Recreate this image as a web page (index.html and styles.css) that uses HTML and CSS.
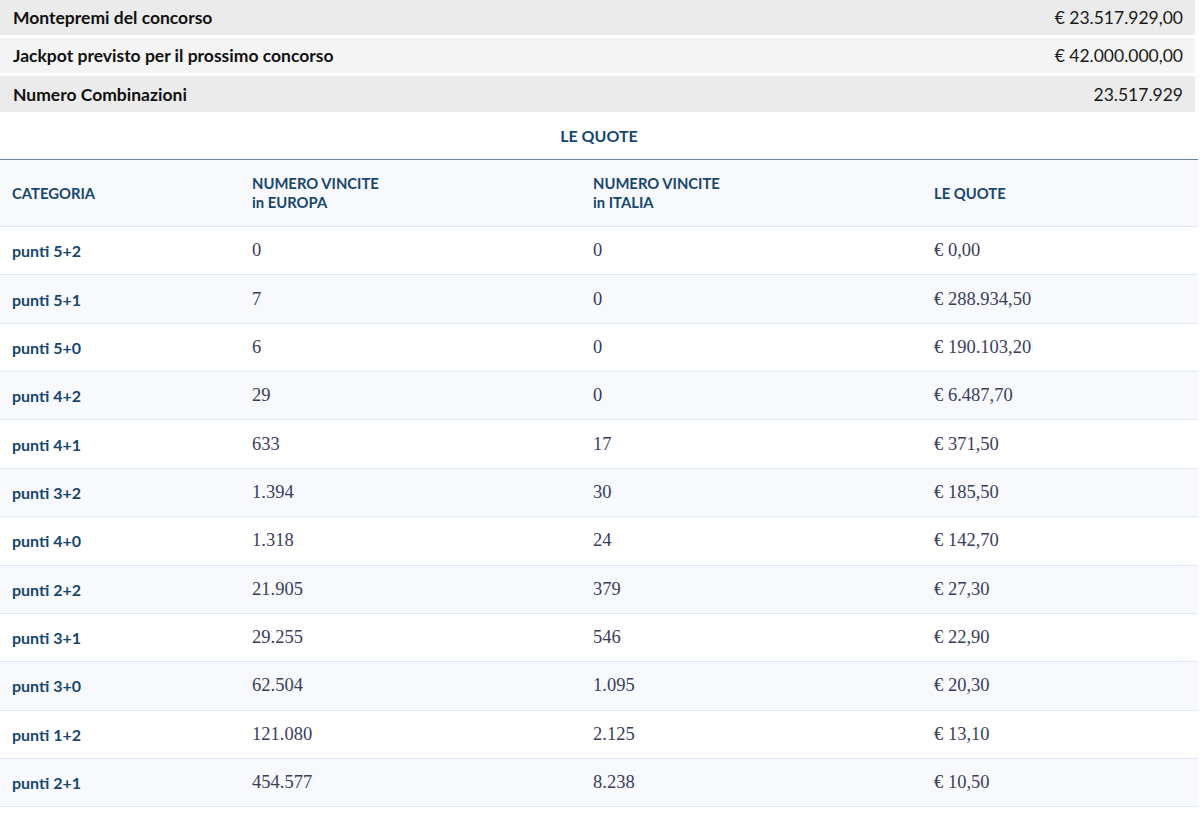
FILE: index.html
```html
<!DOCTYPE html>
<html lang="it">
<head>
<meta charset="utf-8">
<title>Le quote</title>
<link rel="stylesheet" href="styles.css">
</head>
<body>
<div class="summary">
  <div class="sum-row dark"><span class="sum-label">Montepremi del concorso</span><span class="sum-value">€ 23.517.929,00</span></div>
  <div class="sum-row light"><span class="sum-label">Jackpot previsto per il prossimo concorso</span><span class="sum-value">€ 42.000.000,00</span></div>
  <div class="sum-row dark last"><span class="sum-label">Numero Combinazioni</span><span class="sum-value">23.517.929</span></div>
</div>
<h2 class="section-title">LE QUOTE</h2>
<table class="quote-table">
  <colgroup>
    <col class="c1"><col class="c2"><col class="c3"><col class="c4">
  </colgroup>
  <thead>
    <tr>
      <th>CATEGORIA</th>
      <th>NUMERO VINCITE<br>in EUROPA</th>
      <th>NUMERO VINCITE<br>in ITALIA</th>
      <th>LE QUOTE</th>
    </tr>
  </thead>
  <tbody>
    <tr><td class="cat">punti 5+2</td><td>0</td><td>0</td><td>€ 0,00</td></tr>
    <tr><td class="cat">punti 5+1</td><td>7</td><td>0</td><td>€ 288.934,50</td></tr>
    <tr><td class="cat">punti 5+0</td><td>6</td><td>0</td><td>€ 190.103,20</td></tr>
    <tr><td class="cat">punti 4+2</td><td>29</td><td>0</td><td>€ 6.487,70</td></tr>
    <tr><td class="cat">punti 4+1</td><td>633</td><td>17</td><td>€ 371,50</td></tr>
    <tr><td class="cat">punti 3+2</td><td>1.394</td><td>30</td><td>€ 185,50</td></tr>
    <tr><td class="cat">punti 4+0</td><td>1.318</td><td>24</td><td>€ 142,70</td></tr>
    <tr><td class="cat">punti 2+2</td><td>21.905</td><td>379</td><td>€ 27,30</td></tr>
    <tr><td class="cat">punti 3+1</td><td>29.255</td><td>546</td><td>€ 22,90</td></tr>
    <tr><td class="cat">punti 3+0</td><td>62.504</td><td>1.095</td><td>€ 20,30</td></tr>
    <tr><td class="cat">punti 1+2</td><td>121.080</td><td>2.125</td><td>€ 13,10</td></tr>
    <tr><td class="cat">punti 2+1</td><td>454.577</td><td>8.238</td><td>€ 10,50</td></tr>
  </tbody>
</table>
</body>
</html>
```
FILE: styles.css
```css
* { box-sizing: border-box; }
html, body { margin: 0; padding: 0; background: #ffffff; }
body {
  font-family: "Lato", "Roboto", sans-serif;
  color: #1a1a1a;
  width: 1200px;
}
.summary {
  width: 1195px;
  display: flex;
  flex-direction: column;
  gap: 3px;
}
.sum-row {
  height: 35px;
  display: flex;
  align-items: center;
  justify-content: space-between;
  padding: 0 12px 0 13px;
  font-size: 17.5px;
}
.sum-row.dark { background: #ebebeb; }
.sum-row.light { background: #f4f4f4; }
.sum-row.last { height: 36px; }
.sum-label { font-weight: 700; color: #111; }
.sum-value { font-weight: 400; color: #1a1a1a; }
.section-title {
  margin: 0;
  height: 47px;
  display: flex;
  align-items: center;
  justify-content: center;
  font-size: 16px;
  font-weight: 700;
  color: #17476f;
  padding-right: 2px;
}
.quote-table {
  width: 1198px;
  border-collapse: collapse;
  table-layout: fixed;
}
.c1 { width: 240px; }
.c2 { width: 341px; }
.c3 { width: 341px; }
.c4 { width: 276px; }
.quote-table thead tr {
  background: #f7f9fd;
  border-top: 1px solid #6b86a3;
  border-bottom: 1px solid #dbe6f0;
}
.quote-table th {
  text-align: left;
  font-size: 14.8px;
  font-weight: 700;
  line-height: 19px;
  color: #17476f;
  padding: 14px 12px 14px 12px;
  height: 67px;
  vertical-align: middle;
}
.quote-table tbody tr { border-bottom: 1px solid #dfe9f2; }
.quote-table tbody tr:nth-child(even) { background: #f7f9fd; }
.quote-table td {
  height: 48.36px;
  padding: 0 12px;
  vertical-align: middle;
  font-family: "Liberation Serif", serif;
  font-size: 18.5px;
  color: #3a3d5c;
}
.quote-table td.cat {
  font-family: "Lato", "Roboto", sans-serif;
  font-size: 16px;
  font-weight: 700;
  color: #17476f;
}
```
